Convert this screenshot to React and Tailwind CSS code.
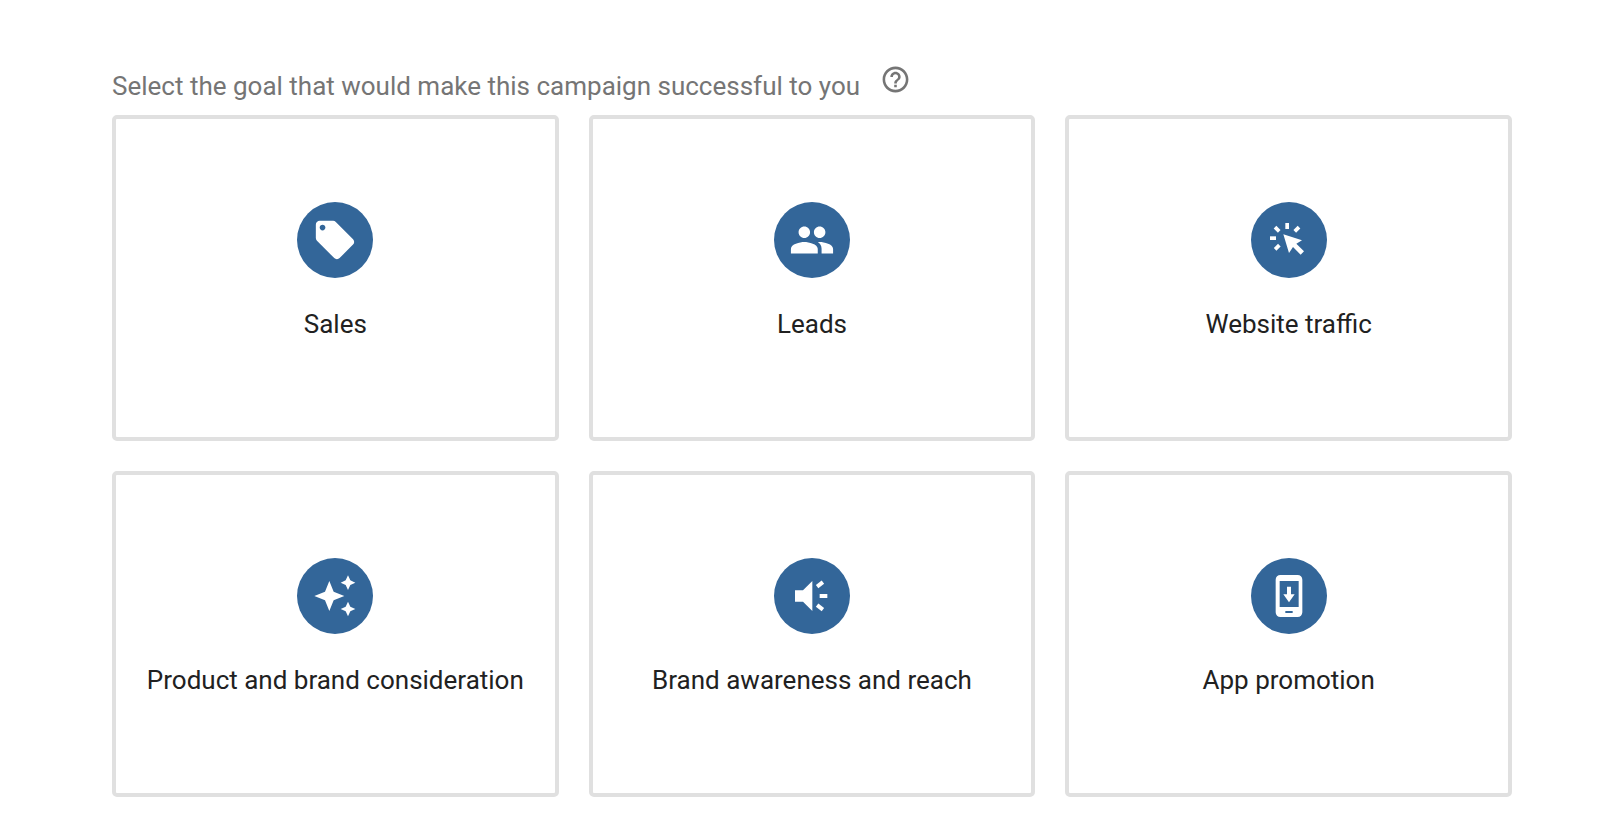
import React from "react";
import { MdHelpOutline, MdLocalOffer, MdPeople } from "react-icons/md";

const ClickIcon = () => (
  <svg viewBox="0 0 228 228" className="w-full h-full" fill="currentColor">
    <rect x="103" y="63" width="11" height="18" />
    <rect x="57" y="103" width="18" height="11" />
    <rect x="69" y="76" width="18" height="11" transform="rotate(45 78 82)" />
    <rect x="129" y="76" width="18" height="11" transform="rotate(-45 138 82)" />
    <rect x="70" y="130" width="18" height="11" transform="rotate(-45 79 136)" />
    <path d="M97 97L153 115L136 125L159 148L149 158L126 135L114 153Z" />
  </svg>
);

const SparkleIcon = () => (
  <svg viewBox="0 0 228 228" className="w-full h-full" fill="currentColor">
    <path d="M97 69L110 101L142 114L110 127L97 159L84 127L52 114L84 101Z" />
    <path d="M153 52L160 67L175 74L160 81L153 96L146 81L131 74L146 67Z" />
    <path d="M153 131L160 146L175 153L160 160L153 175L146 160L131 153L146 146Z" />
  </svg>
);

const SpeakerIcon = () => (
  <svg viewBox="0 0 228 228" className="w-full h-full" fill="currentColor">
    <path d="M63 97H87L115 69V159L87 131H63Z" />
    <rect x="137" y="108" width="23" height="12" />
    <rect x="127" y="73" width="22" height="12" transform="rotate(-38 138 79)" />
    <rect x="127" y="142" width="22" height="12" transform="rotate(38 138 148)" />
  </svg>
);

const PhoneIcon = () => (
  <svg viewBox="0 0 228 228" className="w-full h-full" fill="currentColor">
    <path
      fillRule="evenodd"
      d="M88 51H140A14 14 0 0 1 154 65V163A14 14 0 0 1 140 177H88A14 14 0 0 1 74 163V65A14 14 0 0 1 88 51ZM86 69V147H143V69ZM103 159V165H125V159Z"
    />
    <path d="M108 86H120V109H131L114 133L97 109H108Z" />
  </svg>
);

const goals = [
  { label: "Sales", icon: <MdLocalOffer size={46} /> },
  { label: "Leads", icon: <MdPeople size={46} /> },
  { label: "Website traffic", icon: <ClickIcon /> },
  { label: "Product and brand consideration", icon: <SparkleIcon /> },
  { label: "Brand awareness and reach", icon: <SpeakerIcon /> },
  { label: "App promotion", icon: <PhoneIcon /> },
];

const GoalCard = ({ label, icon }) => {
  return (
    <button
      type="button"
      className="flex flex-col items-center border-4 border-[#e0e0e0] rounded-[5px] bg-white pt-[83px] pb-[97px] cursor-pointer"
    >
      <span className="flex items-center justify-center w-[76px] h-[76px] rounded-full bg-[#336699] text-white">
        {icon}
      </span>
      <span className="mt-[30px] text-[26px] leading-[32px] text-[#212121]">
        {label}
      </span>
    </button>
  );
};

const App = () => {
  return (
    <main className="bg-white pt-[70px] pb-11 pl-28 pr-22 font-['Roboto',sans-serif]">
      <div className="flex items-start mb-[13px]">
        <h1 className="text-[26px] leading-[32px] font-normal text-[#757575]">
          Select the goal that would make this campaign successful to you
        </h1>
        <button
          type="button"
          aria-label="Help"
          className="-mt-1.5 ml-5 text-[#757575] cursor-pointer"
        >
          <MdHelpOutline size={31} />
        </button>
      </div>
      <div className="grid grid-cols-3 gap-[30px]">
        {goals.map((goal) => (
          <GoalCard key={goal.label} label={goal.label} icon={goal.icon} />
        ))}
      </div>
    </main>
  );
};

export default App;
